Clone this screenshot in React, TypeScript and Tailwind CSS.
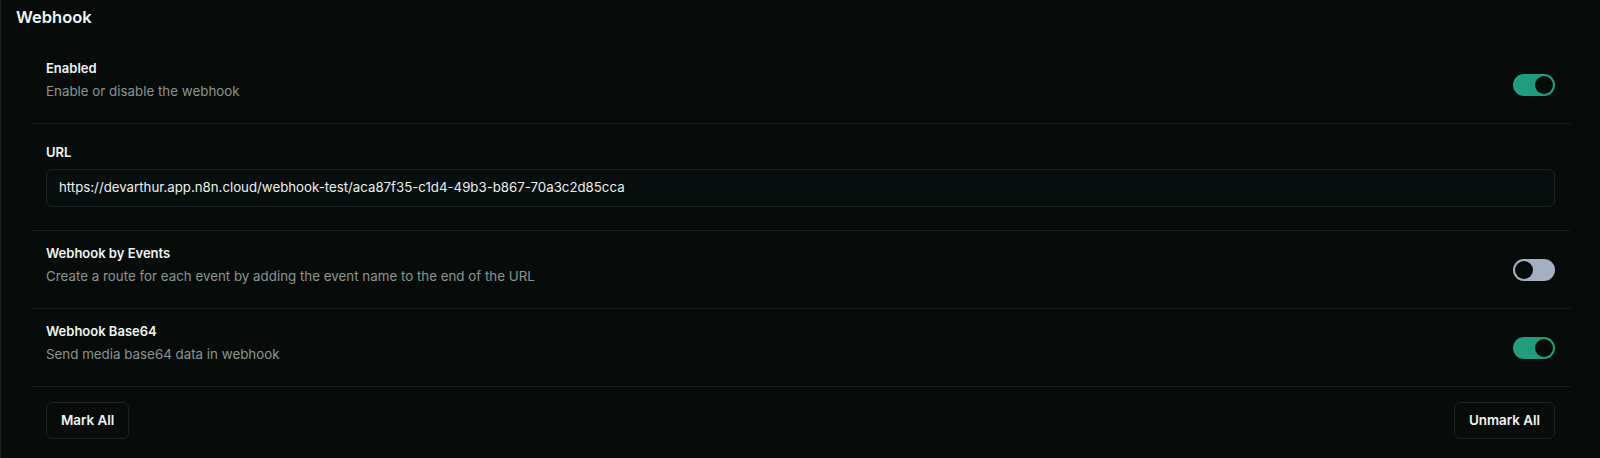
import React from "react";

function Toggle({ on }: { on: boolean }) {
  return (
    <div
      className={
        "flex h-[22px] w-[42px] shrink-0 items-center rounded-full p-[2px] " +
        (on ? "justify-end bg-[#1f9d7c]" : "justify-start bg-[#a4afc1]")
      }
    >
      <div className="h-[18px] w-[18px] rounded-full bg-[#070c0b]" />
    </div>
  );
}

function ToggleRow({ title, desc, on }: { title: string; desc: string; on: boolean }) {
  return (
    <div className="flex h-[78px] items-center justify-between border-b border-[#17211e] px-[15px]">
      <div className="pb-[11px]">
        <div className="text-[13px] leading-[20px] font-semibold text-[#f1f3f2]">{title}</div>
        <div className="mt-[3px] text-[13.35px] leading-[20px] text-[#8a9591]">{desc}</div>
      </div>
      <Toggle on={on} />
    </div>
  );
}

export default function App() {
  return (
    <div
      className="h-[458px] w-full border-l border-[#1a2421] bg-[#070c0b]"
      style={{ fontFamily: "Inter, 'Noto Sans', sans-serif" }}
    >
      <div className="h-[46px] pl-[15px] pt-[5px] text-[16.5px] leading-[24px] font-semibold text-[#f2f4f3]">
        Webhook
      </div>
      <div className="mx-[30px]">
        <ToggleRow title="Enabled" desc="Enable or disable the webhook" on={true} />
        <div className="h-[107px] border-b border-[#17211e] px-[15px] pt-[18px]">
          <div className="text-[13px] leading-[20px] font-semibold text-[#f1f3f2]">URL</div>
          <div className="mt-[7px] flex h-[38px] items-center rounded-md border border-[#1b2522] bg-[#080e0d] px-[12px] text-[13.25px] text-[#eef0ef]">
            https://devarthur.app.n8n.cloud/webhook-test/aca87f35-c1d4-49b3-b867-70a3c2d85cca
          </div>
        </div>
        <ToggleRow
          title="Webhook by Events"
          desc="Create a route for each event by adding the event name to the end of the URL"
          on={false}
        />
        <ToggleRow title="Webhook Base64" desc="Send media base64 data in webhook" on={true} />
        <div className="flex justify-between px-[15px] pt-[15px]">
          <button className="h-[37px] rounded-md border border-[#1b2522] bg-[#070c0b] px-[14px] text-[13.4px] font-semibold text-[#f1f3f2]">
            Mark All
          </button>
          <button className="h-[37px] rounded-md border border-[#1b2522] bg-[#070c0b] px-[14px] text-[13.4px] font-semibold text-[#f1f3f2]">
            Unmark All
          </button>
        </div>
      </div>
    </div>
  );
}
